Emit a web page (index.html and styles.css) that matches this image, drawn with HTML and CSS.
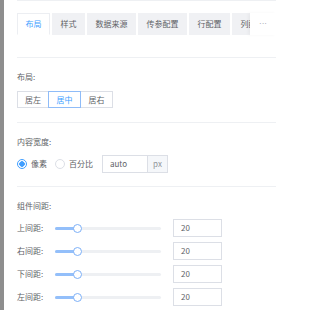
FILE: index.html
```html
<!DOCTYPE html>
<html lang="zh">
<head>
<meta charset="utf-8">
<link rel="stylesheet" href="styles.css">
</head>
<body>
<div class="panel">
  <div class="tabs-wrap">
    <div class="tabs">
      <div class="tab active">布局</div>
      <div class="tab">样式</div>
      <div class="tab">数据来源</div>
      <div class="tab">传参配置</div>
      <div class="tab">行配置</div>
      <div class="tab">列配置</div>
    </div>
    <div class="more">···</div>
  </div>

  <div class="section">
    <div class="label">布局:</div>
    <div class="btn-group">
      <div class="btn">居左</div>
      <div class="btn active">居中</div>
      <div class="btn">居右</div>
    </div>
  </div>

  <div class="section">
    <div class="label">内容宽度:</div>
    <div class="radio-row">
      <div class="radio checked"><span class="dot"></span><span>像素</span></div>
      <div class="radio"><span class="dot"></span><span>百分比</span></div>
      <div class="input-group">
        <div class="input">auto</div>
        <div class="append">px</div>
      </div>
    </div>
  </div>

  <div class="section last">
    <div class="label">组件间距:</div>
    <div class="rows">
      <div class="row"><div class="row-label">上间距:</div><div class="slider"><div class="fill"></div><div class="handle"></div></div><div class="num">20</div></div>
      <div class="row"><div class="row-label">右间距:</div><div class="slider"><div class="fill"></div><div class="handle"></div></div><div class="num">20</div></div>
      <div class="row"><div class="row-label">下间距:</div><div class="slider"><div class="fill"></div><div class="handle"></div></div><div class="num">20</div></div>
      <div class="row"><div class="row-label">左间距:</div><div class="slider"><div class="fill"></div><div class="handle"></div></div><div class="num">20</div></div>
    </div>
  </div>
</div>
</body>
</html>
```

FILE: styles.css
```css
html, body {
  margin: 0;
  padding: 0;
  background: #ffffff;
}
body {
  width: 289px;
  height: 310px;
  overflow: hidden;
  border-left: 4px solid #8e8e8e;
  box-sizing: border-box;
  font-family: "Noto Sans CJK SC", "Noto Sans", sans-serif;
  font-size: 8px;
  line-height: 12px;
  color: #606266;
}
.panel {
  margin-left: 13px;
  width: 259px;
  border-top: 1px solid #eef0f3;
}
.tabs-wrap {
  display: flex;
  margin-top: 12px;
  height: 22px;
}
.tabs {
  flex: 1;
  min-width: 0;
  display: flex;
  gap: 2px;
  height: 22px;
  overflow: hidden;
}
.tab {
  flex: none;
  box-sizing: border-box;
  height: 22px;
  padding: 0 7.5px;
  border: 1px solid #f0f1f4;
  background: #f0f1f4;
  display: flex;
  align-items: center;
  color: #606266;
}
.tab.active {
  background: #ffffff;
  border-color: #eceef2;
  border-bottom-color: #ffffff;
  color: #409eff;
}
.more {
  flex: none;
  width: 26px;
  height: 22px;
  background: #ffffff;
  box-shadow: -2px 0 3px rgba(0,0,0,0.04);
  display: flex;
  align-items: center;
  justify-content: center;
  color: #909399;
  font-family: "Liberation Sans", sans-serif;
  font-size: 8px;
}
.section {
  border-top: 1px solid #eef0f3;
  padding: 13px 0 13px;
}
.tabs-wrap + .section {
  margin-top: 22px;
  padding-bottom: 14px;
}
.label {
  height: 12px;
}
.btn-group {
  display: flex;
  margin-top: 8px;
  height: 17px;
}
.btn {
  box-sizing: border-box;
  height: 17px;
  width: 33px;
  border: 1px solid #dcdfe6;
  margin-left: -1px;
  display: flex;
  align-items: center;
  justify-content: center;
  color: #606266;
}
.btn:first-child {
  margin-left: 0;
  width: 32px;
}
.btn.active {
  border-color: #8fbcf8;
  color: #409eff;
  position: relative;
}
.radio-row {
  margin-top: 7px;
  height: 18px;
  display: flex;
  align-items: center;
}
.radio {
  display: flex;
  align-items: center;
  gap: 4px;
  margin-right: 8px;
}
.dot {
  box-sizing: border-box;
  width: 10px;
  height: 10px;
  border-radius: 50%;
  border: 1px solid #dcdfe6;
  background: #fff;
}
.radio.checked .dot {
  border-color: #409eff;
  background: radial-gradient(circle, #409eff 0 2.5px, #ffffff 3px);
}
.input-group {
  display: flex;
  height: 18px;
  margin-left: 1px;
}
.input {
  box-sizing: border-box;
  width: 45px;
  height: 18px;
  border: 1px solid #dcdfe6;
  border-right: none;
  padding-left: 7px;
  display: flex;
  align-items: center;
}
.append {
  box-sizing: border-box;
  width: 21px;
  height: 18px;
  border: 1px solid #dcdfe6;
  background: #f5f7fa;
  color: #909399;
  display: flex;
  align-items: center;
  justify-content: center;
}
.rows {
  margin-top: 7px;
  display: flex;
  flex-direction: column;
  gap: 5px;
}
.row {
  display: flex;
  align-items: center;
  height: 18px;
}
.row-label {
  width: 38px;
  flex: none;
}
.slider {
  position: relative;
  width: 106px;
  height: 3px;
  background: #eef0f3;
  border-radius: 2px;
  flex: none;
}
.fill {
  width: 22px;
  height: 3px;
  background: #93bffa;
  border-radius: 2px;
}
.handle {
  position: absolute;
  left: 18px;
  top: -3px;
  box-sizing: border-box;
  width: 9px;
  height: 9px;
  border-radius: 50%;
  border: 1.5px solid #7db0f7;
  background: #fff;
}
.num {
  box-sizing: border-box;
  margin-left: 12px;
  width: 49px;
  height: 18px;
  border: 1px solid #dcdfe6;
  padding-left: 7px;
  display: flex;
  align-items: center;
}
```
